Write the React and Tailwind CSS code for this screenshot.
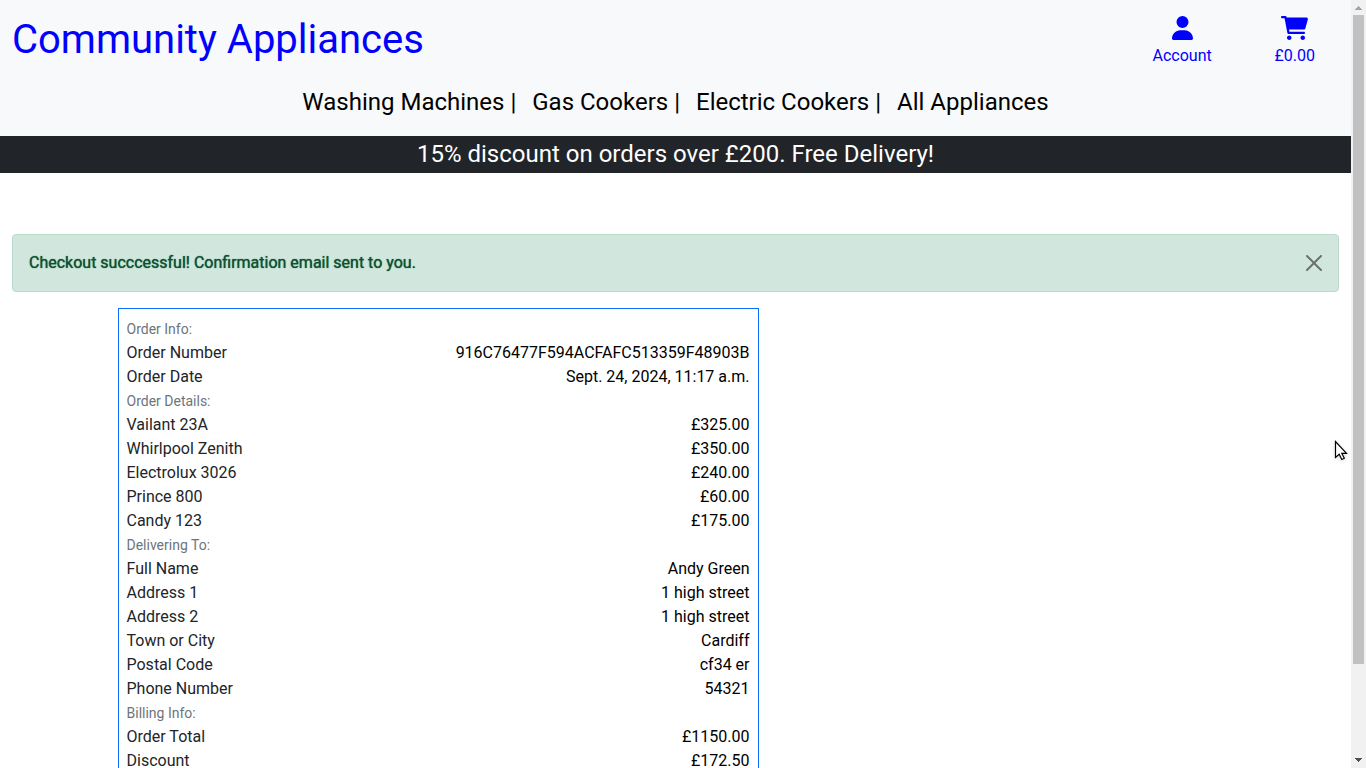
import { FaUser } from "react-icons/fa6";

const categories = ["Washing Machines", "Gas Cookers", "Electric Cookers", "All Appliances"];

const sections = [
  {
    title: "Order Info:",
    rows: [
      ["Order Number", "916C76477F594ACFAFC513359F48903B"],
      ["Order Date", "Sept. 24, 2024, 11:17 a.m."],
    ],
  },
  {
    title: "Order Details:",
    rows: [
      ["Vailant 23A", "£325.00"],
      ["Whirlpool Zenith", "£350.00"],
      ["Electrolux 3026", "£240.00"],
      ["Prince 800", "£60.00"],
      ["Candy 123", "£175.00"],
    ],
  },
  {
    title: "Delivering To:",
    rows: [
      ["Full Name", "Andy Green"],
      ["Address 1", "1 high street"],
      ["Address 2", "1 high street"],
      ["Town or City", "Cardiff"],
      ["Postal Code", "cf34 er"],
      ["Phone Number", "54321"],
    ],
  },
  {
    title: "Billing Info:",
    rows: [
      ["Order Total", "£1150.00"],
      ["Discount", "£172.50"],
    ],
  },
];

function CartIcon() {
  return (
    <svg viewBox="0 0 576 512" className="h-6 w-[27px]" fill="currentColor" aria-hidden="true">
      <path d="M96 0C107.5 0 117.4 8.19 119.6 19.51L121.1 32H541.8C562.1 32 578.3 52.25 572.6 72.66L518.6 264.7C514.7 278.5 502.1 288 487.8 288H170.7L179.9 336H488C501.3 336 512 346.7 512 360C512 373.3 501.3 384 488 384H159.1C148.5 384 138.6 375.8 136.4 364.5L76.14 48H24C10.75 48 0 37.25 0 24C0 10.75 10.75 0 24 0H96zM128 464C128 437.5 149.5 416 176 416C202.5 416 224 437.5 224 464C224 490.5 202.5 512 176 512C149.5 512 128 490.5 128 464zM512 464C512 490.5 490.5 512 464 512C437.5 512 416 490.5 416 464C416 437.5 437.5 416 464 416C490.5 416 512 437.5 512 464z" />
    </svg>
  );
}

function Header() {
  return (
    <header className="bg-[#f8f9fa] pb-4">
      <div className="grid grid-cols-12">
        <h1 className="col-span-10 px-3 pt-4 text-[40px] leading-[48px] text-[#0000ff]">
          <a href="#home">Community Appliances</a>
        </h1>
        <div className="col-span-2 grid grid-cols-2 pt-4 text-[#0000ff]">
          <a href="#account" className="flex flex-col items-center gap-1">
            <FaUser className="h-6 w-[21px]" aria-hidden="true" />
            <span>Account</span>
          </a>
          <a href="#cart" className="flex flex-col items-center gap-1">
            <CartIcon />
            <span>£0.00</span>
          </a>
        </div>
      </div>
      <nav className="flex justify-center gap-4 pt-4 text-2xl leading-9 text-black">
        {categories.map((name, i) => (
          <a key={name} href="#category">
            {name}
            {i < categories.length - 1 && " |"}
          </a>
        ))}
      </nav>
    </header>
  );
}

function Alert() {
  return (
    <div
      role="alert"
      className="mx-3 mt-[61px] flex items-center justify-between rounded border border-[#badbcc] bg-[#d1e7dd] p-4 text-[#0f5132]"
    >
      <strong className="font-normal [text-shadow:0_0_1px_currentColor]">
        Checkout succcessful! Confirmation email sent to you.
      </strong>
      <button type="button" aria-label="Close" className="text-black opacity-50">
        <svg viewBox="0 0 16 16" className="size-4" fill="currentColor" aria-hidden="true">
          <path d="M.293.293a1 1 0 011.414 0L8 6.586 14.293.293a1 1 0 111.414 1.414L9.414 8l6.293 6.293a1 1 0 01-1.414 1.414L8 9.414l-6.293 6.293a1 1 0 01-1.414-1.414L6.586 8 .293 1.707a1 1 0 010-1.414z" />
        </svg>
      </button>
    </div>
  );
}

function OrderSummary() {
  return (
    <div className="mx-auto mt-4 grid max-w-[1140px] grid-cols-12">
      <section className="col-span-7 mx-3 border border-[#0d6efd] p-2">
        {sections.map((section) => (
          <div key={section.title}>
            <h2 className="text-sm leading-6 text-[#6c757d]">{section.title}</h2>
            <dl>
              {section.rows.map(([label, value]) => (
                <div key={label} className="flex justify-between">
                  <dt>{label}</dt>
                  <dd className="text-black">{value}</dd>
                </div>
              ))}
            </dl>
          </div>
        ))}
      </section>
    </div>
  );
}

function ScrollTrack() {
  return (
    <div className="flex w-[15px] shrink-0 flex-col items-center bg-[#f1f1f1]" aria-hidden="true">
      <svg viewBox="0 0 15 15" className="w-full shrink-0" shapeRendering="crispEdges">
        <path d="M4 10h7L7.500 6z" fill="#a3a3a3" />
      </svg>
      <div className="w-full flex-1 px-[2px]">
        <div className="h-[88%] bg-[#c1c1c1]" />
      </div>
      <svg viewBox="0 0 15 15" className="w-full shrink-0" shapeRendering="crispEdges">
        <path d="M4 5h7L7.500 9z" fill="#505050" />
      </svg>
    </div>
  );
}

function Pointer() {
  return (
    <svg
      viewBox="0 0 14 22"
      className="pointer-events-none absolute top-[440px] right-[18px] h-[22px] w-[14px] drop-shadow-sm"
      aria-hidden="true"
    >
      <path
        d="M1.500 1.500v16l3.700-3.300 2.600 5.300 2.500-1.200-2.500-5h4.700z"
        fill="#fff"
        stroke="#000"
        strokeWidth="1.200"
      />
    </svg>
  );
}

export default function App() {
  return (
    <div className="relative flex h-screen overflow-hidden bg-white font-['Roboto',sans-serif] text-base text-[#212529]">
      <div className="min-w-0 flex-1 overflow-hidden">
        <Header />
        <p className="bg-[#212529] pb-px text-center text-2xl leading-9 text-white">
          15% discount on orders over £200. Free Delivery!
        </p>
        <main>
          <Alert />
          <OrderSummary />
        </main>
      </div>
      <ScrollTrack />
      <Pointer />
    </div>
  );
}
